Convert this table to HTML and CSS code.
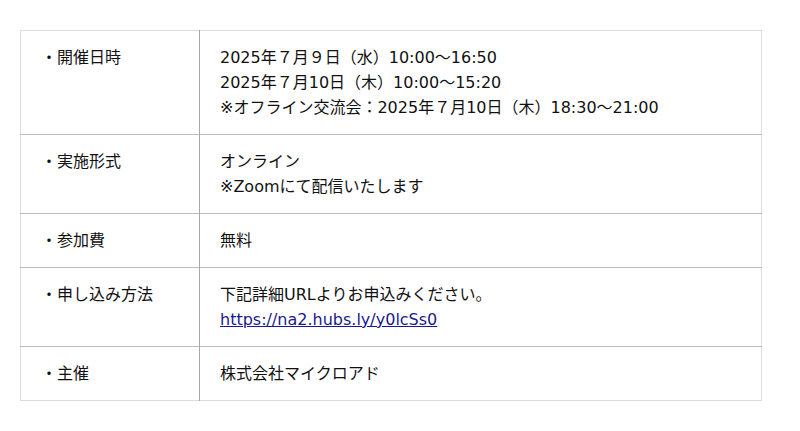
FILE: index.html
```html
<!DOCTYPE html>
<html lang="ja">
<head>
<meta charset="utf-8">
<link rel="stylesheet" href="styles.css">
</head>
<body>
<div class="page">
<table class="info">
<tr><th>・開催日時</th><td>2025年７月９日（水）10:00〜16:50<br>2025年７月10日（木）10:00〜15:20<br>※オフライン交流会：2025年７月10日（木）18:30〜21:00</td></tr>
<tr><th>・実施形式</th><td>オンライン<br>※Zoomにて配信いたします</td></tr>
<tr><th>・参加費</th><td>無料</td></tr>
<tr><th>・申し込み方法</th><td>下記詳細URLよりお申込みください。<br><a class="link" href="#">https://na2.hubs.ly/y0lcSs0</a></td></tr>
<tr><th>・主催</th><td>株式会社マイクロアド</td></tr>
</table>
</div>
</body>
</html>
```
FILE: styles.css
```css
html, body { margin: 0; padding: 0; background: #fff; }
.page { padding: 30px 0 0 20px; }
.info {
  width: 742px;
  border-collapse: collapse;
  border: 1px solid #dcdcdc;
  font-family: "DejaVu Sans", "Noto Sans CJK JP", sans-serif;
  font-size: 16px;
  line-height: 25px;
  color: #111;
}
.info th, .info td {
  text-align: left;
  vertical-align: top;
  font-weight: normal;
  padding: 14px 20px 14px 20px;
  border-top: 1px solid #bdbdbd;
}
.info tr:first-child th, .info tr:first-child td { border-top: 1px solid #dcdcdc; }
.info th { width: 138px; border-right: 1px solid #a8a8a8; }
.link { color: #1a1a8e; text-decoration: underline; }
```
